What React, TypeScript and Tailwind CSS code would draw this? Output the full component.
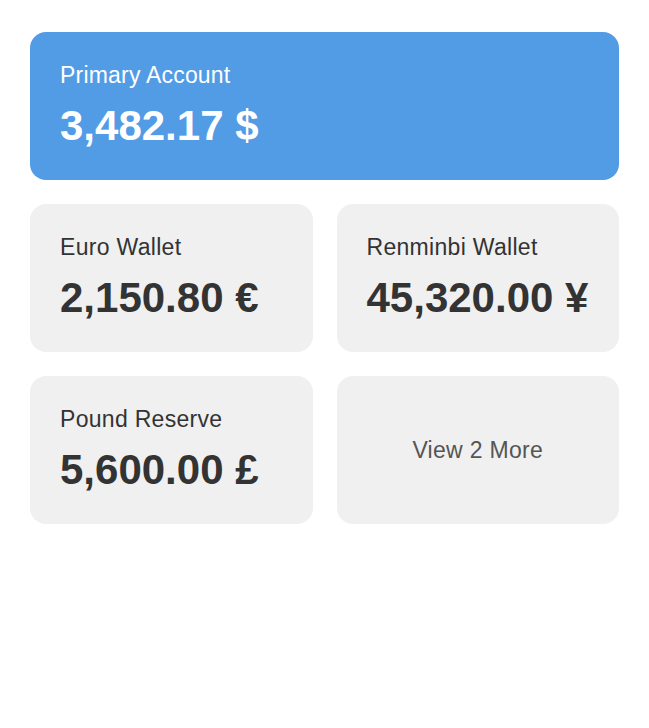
const wallets = [
  { name: 'Euro Wallet', amount: '2,150.80 €' },
  { name: 'Renminbi Wallet', amount: '45,320.00 ¥' },
  { name: 'Pound Reserve', amount: '5,600.00 £' },
]

export default function App() {
  return (
    <div className="min-h-screen bg-white px-[30px] pt-[32px] font-['Liberation_Sans',Arial,sans-serif]">
      {/* Main account */}
      <div className="rounded-2xl bg-[#529be5] p-[30px] text-white">
        <div className="text-[23px] leading-[26px] tracking-[0.2px]">Primary Account</div>
        <div className="mt-[14px] text-[42px] font-bold leading-[48px]">3,482.17 $</div>
      </div>

      {/* Other wallets */}
      <div className="mt-6 grid grid-cols-2 gap-6">
        {wallets.map((w) => (
          <div key={w.name} className="rounded-2xl bg-[#f0f0f0] p-[30px] text-[#333333]">
            <div className="text-[23px] leading-[26px] tracking-[0.3px]">{w.name}</div>
            <div className="mt-[14px] text-[42px] font-bold leading-[48px]">{w.amount}</div>
          </div>
        ))}
        <div className="flex items-center justify-center rounded-2xl bg-[#f0f0f0] text-[23px] tracking-[0.3px] text-[#555555]">
          View 2 More
        </div>
      </div>
    </div>
  )
}
